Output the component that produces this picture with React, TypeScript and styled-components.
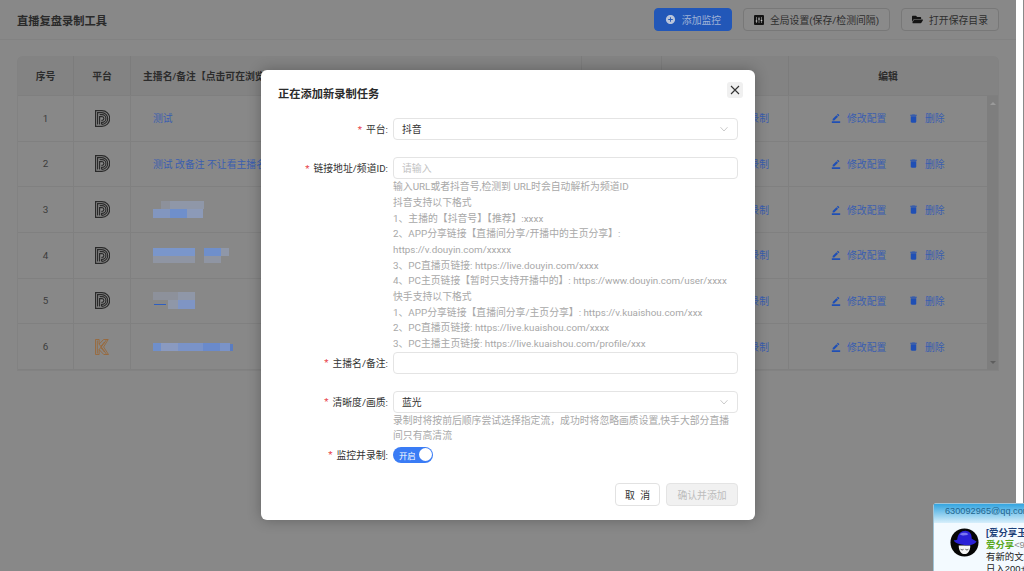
import { createGlobalStyle, styled } from "styled-components";
import { FaFolderOpen } from "react-icons/fa";
import { MdAddCircle, MdBorderColor, MdDelete } from "react-icons/md";

const FONT = `Roboto, "Noto Sans CJK SC", sans-serif`;

const GlobalStyle = createGlobalStyle`
  html, body {
    margin: 0;
    padding: 0;
    background: #ffffff;
    font-family: ${FONT};
  }
  * {
    box-sizing: border-box;
  }
`;

type Cell = { x: number; y: number; w: number; h: number; c: string };

const ROWS: { id: number; platform: "douyin" | "kuaishou"; name?: string; blur?: Cell[] }[] = [
  { id: 1, platform: "douyin", name: "测试" },
  { id: 2, platform: "douyin", name: "测试 改备注 不让看主播名字" },
  {
    id: 3,
    platform: "douyin",
    blur: [
      { x: 8, y: 0, w: 17, h: 8, c: "#8d919b" },
      { x: 17, y: 0, w: 34, h: 8, c: "#8f97a8" },
      { x: 0, y: 8, w: 17, h: 9, c: "#8296bf" },
      { x: 17, y: 8, w: 17, h: 9, c: "#6f8fcb" },
      { x: 34, y: 8, w: 16, h: 9, c: "#8c9ab8" },
    ],
  },
  {
    id: 4,
    platform: "douyin",
    blur: [
      { x: 0, y: 0, w: 42, h: 8, c: "#7a96cb" },
      { x: 51, y: 0, w: 17, h: 8, c: "#6f8fcb" },
      { x: 68, y: 0, w: 8, h: 8, c: "#8f97a8" },
      { x: 0, y: 8, w: 42, h: 7, c: "#8f95a3" },
      { x: 51, y: 8, w: 17, h: 7, c: "#8f95a3" },
    ],
  },
  {
    id: 5,
    platform: "douyin",
    blur: [
      { x: 0, y: 0, w: 25, h: 8, c: "#8d919b" },
      { x: 25, y: 0, w: 17, h: 8, c: "#8f97a8" },
      { x: 15, y: 8, w: 10, h: 9, c: "#8f97a8" },
      { x: 25, y: 8, w: 17, h: 9, c: "#7f95c4" },
      { x: 1, y: 12, w: 12, h: 1, c: "#2f5fc0" },
    ],
  },
  {
    id: 6,
    platform: "kuaishou",
    blur: [
      { x: 0, y: 0, w: 8, h: 8, c: "#6f8fcb" },
      { x: 8, y: 0, w: 17, h: 8, c: "#8a9ac0" },
      { x: 25, y: 0, w: 25, h: 8, c: "#7a93c8" },
      { x: 50, y: 0, w: 17, h: 8, c: "#6a8acb" },
      { x: 67, y: 0, w: 10, h: 8, c: "#7a93c8" },
      { x: 77, y: 1, w: 3, h: 7, c: "#5a7cc0" },
    ],
  },
];

const DOUYIN_HELP = [
  "输入URL或者抖音号,检测到 URL时会自动解析为频道ID",
  "抖音支持以下格式",
  "1、主播的【抖音号】【推荐】:xxxx",
  "2、APP分享链接【直播间分享/开播中的主页分享】:",
  "https://v.douyin.com/xxxxx",
  "3、PC直播页链接: https://live.douyin.com/xxxx",
  "4、PC主页链接【暂时只支持开播中的】: https://www.douyin.com/user/xxxx",
  "快手支持以下格式",
  "1、APP分享链接【直播间分享/主页分享】: https://v.kuaishou.com/xxx",
  "2、PC直播页链接: https://live.kuaishou.com/xxxx",
  "3、PC主播主页链接: https://live.kuaishou.com/profile/xxx",
];

const QUALITY_HELP = [
  "录制时将按前后顺序尝试选择指定流，成功时将忽略画质设置,快手大部分直播",
  "间只有高清流",
];

function DouyinMark() {
  return (
    <svg width="15" height="17" viewBox="0 0 15 17" fill="none" stroke="#2a2a2a" strokeWidth="1.2">
      <path d="M.6.6h6.2a7.9 7.9 0 0 1 0 15.8H.6z" />
      <path d="M2.6 14.4V2.6h4.2a5.9 5.9 0 0 1 0 11.8" />
      <path d="M4.6 14.4V6.6h2.4a1.9 1.9 0 0 1 0 3.8H6.4" />
      <path d="M4.6 4.6h2.4a3.9 3.9 0 0 1 0 7.8H6.6v2" />
    </svg>
  );
}

function KuaishouMark() {
  return (
    <svg width="14" height="16" viewBox="0 0 14 16" fill="none" stroke="#9c6530" strokeWidth=".8">
      <path d="M.5.5h3.6v4.6L8.6.5h4.6L8.6 8l4.9 7.5H8.8L4.1 10.6v4.9H.5z" />
      <path d="M2.3 1.5v13" />
      <path d="M4.1 5.1 8.6 11l3 4.5" />
      <path d="M4.1 10.6 8.6 5l3-4.5" />
      <path d="M6 7.2 9.4 3M6 8.8 9.4 13" />
    </svg>
  );
}

function SlidersMark() {
  return (
    <svg width="10" height="10" viewBox="0 0 10 10">
      <rect width="10" height="10" rx="1" fill="#141414" />
      <path d="M2.5 2v6M5 2v6M7.5 2v6" stroke="#8a8a8a" strokeWidth=".8" />
      <path d="M1.7 6h1.6M4.2 4h1.6M6.7 5.4h1.6" stroke="#d0d0d0" strokeWidth="1" />
    </svg>
  );
}

function Chevron() {
  return (
    <svg width="10" height="10" viewBox="0 0 10 10" fill="none" stroke="#c4c4c4" strokeWidth=".9">
      <path d="M1.5 3.2 5 7l3.5-3.8" />
    </svg>
  );
}

function Avatar() {
  return (
    <svg width="29" height="29" viewBox="0 0 30 30">
      <circle cx="15" cy="15" r="14.5" fill="#050505" />
      <path d="M9 18h12c0 6-3 9-6 9s-6-3-6-9z" fill="#f6f6f6" />
      <path d="M11 22c1.500.8 2.500.8 3 0M16 22c.8.8 2 .8 3 0" stroke="#222" strokeWidth=".8" fill="none" />
      <path d="M7.500 12C8 6 12 2.500 17 3c4 .5 5.500 3.500 5.500 8l5 3c-1.500 3-7 4.500-12 3.800S4 15.500 4 12.500c1 .5 2.500.3 3.500-.5z" fill="#2a20d6" />
      <path d="M10 6.500C13 4.500 17 4.500 19 6.500c-2.500 1.500-6.500 1.800-9 0z" fill="#7a76f0" />
    </svg>
  );
}

function BlurredName({ cells }: { cells: Cell[] }) {
  const width = Math.max(...cells.map((c) => c.x + c.w));
  const height = Math.max(...cells.map((c) => c.y + c.h));
  return (
    <svg width={width} height={height} viewBox={`0 0 ${width} ${height}`}>
      {cells.map((c, idx) => (
        <rect key={idx} x={c.x} y={c.y} width={c.w} height={c.h} fill={c.c} />
      ))}
    </svg>
  );
}

export default function App() {
  return (
    <Screen>
      <GlobalStyle />
      <Page>
        <Header>
          <Title>直播复盘录制工具</Title>
          <HeaderActions>
            <HeaderButton $primary $width={78}>
              <MdAddCircle size={11} color="#b9c4da" />
              添加监控
            </HeaderButton>
            <HeaderButton $width={147}>
              <SlidersMark />
              全局设置(保存/检测间隔)
            </HeaderButton>
            <HeaderButton $width={98}>
              <FaFolderOpen size={11} color="#141414" />
              打开保存目录
            </HeaderButton>
          </HeaderActions>
        </Header>

        <Table>
          <HeadRow>
            <HeadCell>序号</HeadCell>
            <HeadCell>平台</HeadCell>
            <NameHeadCell>主播名/备注【点击可在浏览器打开】</NameHeadCell>
            <HeadCell>状态</HeadCell>
            <HeadCell>录制</HeadCell>
            <HeadCell>编辑</HeadCell>
            <span />
          </HeadRow>
          <TableBody>
            <Rows>
              {ROWS.map((row) => (
                <Row key={row.id}>
                  <IndexCell>{row.id}</IndexCell>
                  <BodyCell>
                    {row.platform === "douyin" ? <DouyinMark /> : <KuaishouMark />}
                  </BodyCell>
                  <NameCell>
                    {row.blur ? <BlurredName cells={row.blur} /> : <LinkText>{row.name}</LinkText>}
                  </NameCell>
                  <BodyCell />
                  <RecordCell>
                    <LinkText>开始录制</LinkText>
                  </RecordCell>
                  <EditCell>
                    <EditAction $width={77}>
                      <MdBorderColor size={10} />
                      修改配置
                    </EditAction>
                    <EditAction>
                      <MdDelete size={11} />
                      删除
                    </EditAction>
                  </EditCell>
                </Row>
              ))}
            </Rows>
            <Scrollbar>
              <Arrow $up />
              <Arrow />
            </Scrollbar>
          </TableBody>
        </Table>
      </Page>
      <EdgeStrip />

      <Scrim>
        <Modal>
          <ModalHead>
            <ModalTitle>正在添加新录制任务</ModalTitle>
            <CloseButton aria-label="关闭">
              <svg width="10" height="10" viewBox="0 0 10 10" stroke="#333" strokeWidth="1.1">
                <path d="M1 1l8 8M9 1 1 9" />
              </svg>
            </CloseButton>
          </ModalHead>

          <Form>
            <FormItem $gap={17.4}>
              <FormLabel>平台:</FormLabel>
              <Field>
                <Control>
                  <ControlValue>抖音</ControlValue>
                  <Chevron />
                </Control>
              </Field>
            </FormItem>

            <FormItem>
              <FormLabel>链接地址/频道ID:</FormLabel>
              <Field>
                <Control>
                  <Placeholder>请输入</Placeholder>
                </Control>
                <Help>
                  {DOUYIN_HELP.map((line) => (
                    <HelpLine key={line}>{line}</HelpLine>
                  ))}
                </Help>
              </Field>
            </FormItem>

            <FormItem $gap={17}>
              <FormLabel>主播名/备注:</FormLabel>
              <Field>
                <Control />
              </Field>
            </FormItem>

            <FormItem>
              <FormLabel>清晰度/画质:</FormLabel>
              <Field>
                <Control>
                  <ControlValue>蓝光</ControlValue>
                  <Chevron />
                </Control>
                <Help>
                  {QUALITY_HELP.map((line) => (
                    <HelpLine key={line}>{line}</HelpLine>
                  ))}
                </Help>
              </Field>
            </FormItem>

            <FormItem>
              <FormLabel>监控并录制:</FormLabel>
              <Field>
                <SwitchRow>
                  <Switch>
                    开启
                    <Knob />
                  </Switch>
                </SwitchRow>
              </Field>
            </FormItem>
          </Form>

          <ModalFoot>
            <CancelButton>取 消</CancelButton>
            <ConfirmButton disabled>确认并添加</ConfirmButton>
          </ModalFoot>
        </Modal>
      </Scrim>

      <Notice>
        <NoticeHead>630092965@qq.com</NoticeHead>
        <NoticeBody>
          <Avatar />
          <NoticeText>
            <NoticeTitle>[爱分享玉]</NoticeTitle>
            <NoticeFrom>
              爱分享<NoticeMail>&lt;9</NoticeMail>
            </NoticeFrom>
            <NoticeLine>有新的文章</NoticeLine>
            <NoticeLine>日入200+</NoticeLine>
          </NoticeText>
        </NoticeBody>
      </Notice>
    </Screen>
  );
}

const Screen = styled.div`
  position: relative;
  display: flex;
  width: 1024px;
  height: 571px;
  overflow: hidden;
  background: #ffffff;
`;

const Page = styled.div`
  width: 1016px;
  height: 100%;
  background: #888888;
  color: #2a2a2a;
  font-size: 9.84px;
`;

const EdgeStrip = styled.div`
  flex: 1;
  border-right: 1px solid #8a8a8a;
`;

const Header = styled.header`
  display: flex;
  align-items: center;
  justify-content: space-between;
  height: 40px;
  padding: 0 17px;
  border-bottom: 1px solid #828282;
`;

const Title = styled.h1`
  margin: 0;
  font-size: 11.25px;
  font-weight: 600;
  color: #2a2a2a;
`;

const HeaderActions = styled.div`
  display: flex;
  gap: 11px;
`;

const HeaderButton = styled.button<{ $primary?: boolean; $width: number }>`
  display: flex;
  align-items: center;
  justify-content: center;
  gap: 6px;
  width: ${(p) => p.$width}px;
  height: 23px;
  padding: 0;
  border-radius: 4px;
  font-family: inherit;
  font-size: 9.84px;
  background: ${(p) => (p.$primary ? "#2257b8" : "#8a8a8a")};
  border: 1px solid ${(p) => (p.$primary ? "#2257b8" : "#787878")};
  color: ${(p) => (p.$primary ? "#9fb2d6" : "#2e2e2e")};
`;

const Table = styled.section`
  width: 982px;
  margin: 16px 0 0 17px;
  border: 1px solid #828282;
  border-top: 0;
  border-radius: 6px 6px 0 0;
  overflow: hidden;
`;

const COLUMNS = "56px 57px 451px 80px 127px 198px";

const HeadRow = styled.div`
  display: grid;
  grid-template-columns: ${COLUMNS} 1fr;
  height: 40px;
  background: #838383;
  border-bottom: 1px solid #7f7f7f;
`;

const HeadCell = styled.div`
  display: flex;
  align-items: center;
  justify-content: center;
  font-weight: 600;
  color: #2c2c2c;
  border-right: 1px solid #7c7c7c;
  white-space: nowrap;
  overflow: hidden;

  &:nth-child(6) {
    border-right: 0;
  }
`;

const NameHeadCell = styled(HeadCell)`
  justify-content: flex-start;
  padding-left: 12px;
`;

const TableBody = styled.div`
  display: flex;
`;

const Rows = styled.div`
  width: 969px;
`;

const Row = styled.div`
  display: grid;
  grid-template-columns: ${COLUMNS};
  height: 45.67px;
  border-bottom: 1px solid #808080;
`;

const BodyCell = styled.div`
  display: flex;
  align-items: center;
  justify-content: center;
  border-right: 1px solid #808080;
`;

const IndexCell = styled(BodyCell)`
  color: #3c3c3c;
`;

const NameCell = styled(BodyCell)`
  justify-content: flex-start;
  padding-left: 22px;
  white-space: nowrap;
`;

const RecordCell = styled(BodyCell)`
  justify-content: flex-end;
  padding-right: 19px;
`;

const EditCell = styled(BodyCell)`
  justify-content: flex-start;
  padding-left: 42px;
  border-right: 0;
`;

const LinkText = styled.span`
  color: #3a5eb0;
`;

const EditAction = styled.span<{ $width?: number }>`
  display: flex;
  align-items: center;
  gap: 6px;
  width: ${(p) => (p.$width ? `${p.$width}px` : "auto")};
  color: #3a5eb0;

  svg {
    color: #1f4fb5;
  }
`;

const Scrollbar = styled.div`
  display: flex;
  flex-direction: column;
  justify-content: space-between;
  align-items: center;
  width: 12px;
  padding: 6px 0;
  background: #7e7e7e;
`;

const Arrow = styled.i<{ $up?: boolean }>`
  width: 0;
  height: 0;
  border-left: 3px solid transparent;
  border-right: 3px solid transparent;
  border-bottom: ${(p) => (p.$up ? "3px solid #9a9a9a" : "0")};
  border-top: ${(p) => (p.$up ? "0" : "3px solid #5e5e5e")};
`;

const Scrim = styled.div`
  position: absolute;
  top: 0;
  left: 0;
  display: flex;
  justify-content: center;
  width: 1016px;
  height: 100%;
  padding-top: 70px;
`;

const Modal = styled.div`
  display: flex;
  flex-direction: column;
  width: 494px;
  height: 450px;
  padding: 12px 17px 14px;
  background: #ffffff;
  border-radius: 6px;
  box-shadow: 0 0 14px rgba(0, 0, 0, 0.28);
  color: #333333;
  font-size: 9.84px;
`;

const ModalHead = styled.div`
  display: flex;
  align-items: flex-start;
  justify-content: space-between;
  height: 36px;
`;

const ModalTitle = styled.h2`
  margin: 3px 0 0;
  font-size: 11.25px;
  font-weight: 600;
  color: #2b2b2b;
`;

const CloseButton = styled.button`
  display: flex;
  align-items: center;
  justify-content: center;
  width: 16px;
  height: 16px;
  margin-right: -5px;
  padding: 0;
  border: 0;
  border-radius: 3px;
  background: #f0f0f0;
`;

const Form = styled.div`
  display: flex;
  flex-direction: column;
  flex: 1;
`;

const FormItem = styled.div<{ $gap?: number }>`
  display: grid;
  grid-template-columns: 110px 345px;
  column-gap: 5px;
  margin-bottom: ${(p) => p.$gap ?? 0}px;
`;

const FormLabel = styled.label`
  display: flex;
  align-items: center;
  justify-content: flex-end;
  height: 22px;
  color: #333333;
  white-space: nowrap;

  &::before {
    content: "*";
    margin-right: 4px;
    color: #e8414a;
  }
`;

const Field = styled.div`
  min-width: 0;
`;

const Control = styled.div`
  display: flex;
  align-items: center;
  justify-content: space-between;
  height: 22px;
  padding: 0 8px;
  background: #ffffff;
  border: 1px solid #e4e4e4;
  border-radius: 4px;
`;

const ControlValue = styled.span`
  color: #333333;
`;

const Placeholder = styled.span`
  color: #c2c2c2;
`;

const Help = styled.div`
  color: #a8a8a8;
  line-height: 15.65px;
`;

const HelpLine = styled.div`
  white-space: nowrap;
`;

const SwitchRow = styled.div`
  display: flex;
  align-items: center;
  height: 22px;
`;

const Switch = styled.div`
  display: flex;
  align-items: center;
  justify-content: space-between;
  width: 40px;
  height: 16px;
  padding: 0 1.5px 0 6px;
  background: #3a7cf5;
  border-radius: 8px;
  color: #ffffff;
  font-size: 8.4px;
`;

const Knob = styled.span`
  width: 13px;
  height: 13px;
  background: #ffffff;
  border-radius: 50%;
`;

const ModalFoot = styled.div`
  display: flex;
  justify-content: flex-end;
  gap: 6px;
`;

const CancelButton = styled.button`
  width: 45px;
  height: 23px;
  padding: 0;
  background: #ffffff;
  border: 1px solid #e2e2e2;
  border-radius: 4px;
  color: #333333;
  font-family: inherit;
  font-size: 9.84px;
  word-spacing: 3px;
`;

const ConfirmButton = styled.button`
  width: 72px;
  height: 23px;
  padding: 0;
  background: #f1f1f1;
  border: 1px solid #e4e4e4;
  border-radius: 4px;
  color: #bdbdbd;
  font-family: inherit;
  font-size: 9.84px;
`;

const Notice = styled.aside`
  position: absolute;
  left: 933px;
  top: 503px;
  width: 130px;
  height: 90px;
  background: #f3faff;
  border: 1px solid #9fc4d8;
  border-radius: 3px 0 0 0;
  font-family: "Liberation Sans", "Noto Sans CJK SC", sans-serif;
  white-space: nowrap;
`;

const NoticeHead = styled.div`
  height: 19px;
  padding: 2px 0 0 11px;
  background: linear-gradient(#34a5e0, #d8effb);
  color: #23658f;
  font-size: 9.2px;
`;

const NoticeBody = styled.div`
  display: flex;
  gap: 7px;
  padding: 5px 0 0 16px;
`;

const NoticeText = styled.div`
  display: flex;
  flex-direction: column;
  margin-top: -1px;
  line-height: 12px;
  font-size: 9.4px;
`;

const NoticeTitle = styled.b`
  color: #1c3f78;
`;

const NoticeFrom = styled.b`
  color: #58a81c;
`;

const NoticeMail = styled.span`
  color: #8a8a8a;
  font-weight: 400;
`;

const NoticeLine = styled.span`
  color: #222222;
`;
